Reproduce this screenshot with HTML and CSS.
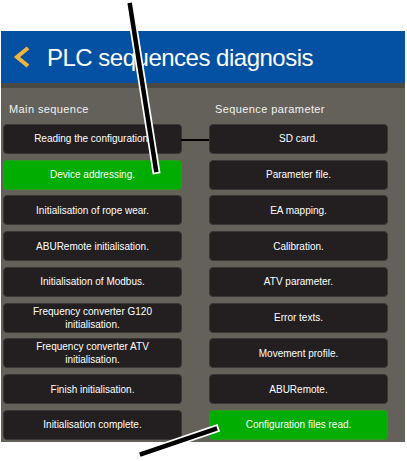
FILE: index.html
```html
<!DOCTYPE html>
<html lang="en">
<head>
  <meta charset="UTF-8">
  <title>PLC sequences diagnosis</title>
  <link rel="stylesheet" href="styles.css">
</head>
<body>

  <div class="screen">
    <div class="titlebar">
      <svg class="back" width="20" height="24" viewBox="0 0 20 24">
        <polyline points="16,3 5,12 16,21" fill="none" stroke="#f2b53c" stroke-width="4" stroke-linejoin="miter" stroke-linecap="butt"/>
      </svg>
      <h1>PLC sequences diagnosis</h1>
    </div>
    <div class="strip"></div>

    <div class="panel">
      <div class="label">Main sequence</div>
      <div class="label">Sequence parameter</div>

      <div class="step linked">Reading the configuration.</div>
      <div class="step">SD card.</div>

      <div class="step done">Device addressing.</div>
      <div class="step">Parameter file.</div>

      <div class="step">Initialisation of rope wear.</div>
      <div class="step">EA mapping.</div>

      <div class="step">ABURemote initialisation.</div>
      <div class="step">Calibration.</div>

      <div class="step">Initialisation of Modbus.</div>
      <div class="step">ATV parameter.</div>

      <div class="step">Frequency converter G120<br>initialisation.</div>
      <div class="step">Error texts.</div>

      <div class="step">Frequency converter ATV<br>initialisation.</div>
      <div class="step">Movement profile.</div>

      <div class="step">Finish initialisation.</div>
      <div class="step">ABURemote.</div>

      <div class="step">Initialisation complete.</div>
      <div class="step done">Configuration files read.</div>
    </div>
  </div>

  <!-- pointer lines drawn on top of the screen -->
  <svg class="pointers" width="407" height="461" viewBox="0 0 407 461">
    <g stroke="#fff" stroke-width="8" stroke-linecap="square">
      <line x1="130" y1="5" x2="156" y2="170"/>
      <line x1="142" y1="454" x2="215" y2="429"/>
    </g>
    <g stroke="#000" stroke-width="4.5" stroke-linecap="square">
      <line x1="130" y1="5" x2="156" y2="170"/>
      <line x1="142" y1="454" x2="215" y2="429"/>
    </g>
  </svg>

</body>
</html>
```

FILE: styles.css
```css
* {
  box-sizing: border-box;
}

html, body {
  margin: 0;
  background: #fff;
  font-family: "Liberation Sans", Arial, sans-serif;
}

.screen {
  padding-top: 31px;
  padding-left: 1px;
  width: 405px;
}

.titlebar {
  display: flex;
  align-items: center;
  height: 52px;
  background: #0451a4;
  color: #fff;
}

.titlebar .back {
  margin-left: 11px;
  margin-right: 15px;
}

.titlebar h1 {
  margin: 0;
  font-size: 24px;
  font-weight: normal;
  letter-spacing: -0.5px;
  margin-top: 1px;
}

.strip {
  height: 5px;
  background: #4a4944;
}

.panel {
  display: grid;
  grid-template-columns: 179px 179px;
  grid-auto-rows: 30px;
  column-gap: 27px;
  row-gap: 5.75px;
  padding: 0 0 2px 2px;
  background: #64615b;
}

.label {
  height: 29px;
  padding: 15px 0 0 6px;
  font-size: 11px;
  letter-spacing: 0.4px;
  color: #f2f2f2;
}

.step {
  position: relative;
  display: flex;
  align-items: center;
  justify-content: center;
  text-align: center;
  line-height: 13px;
  border: 1px solid #3a3737;
  border-radius: 4px;
  background: #231f20;
  color: #fff;
  font-size: 10px;
}

.step.done {
  background: #00ad00;
  border-color: #2a9a1f;
}

/* link from the first main step over to the parameter column */
.step.linked::after {
  content: "";
  position: absolute;
  left: 100%;
  top: 50%;
  width: 28px;
  height: 2px;
  background: #000;
}

.pointers {
  position: absolute;
  top: 0;
  left: 0;
  pointer-events: none;
}
```
